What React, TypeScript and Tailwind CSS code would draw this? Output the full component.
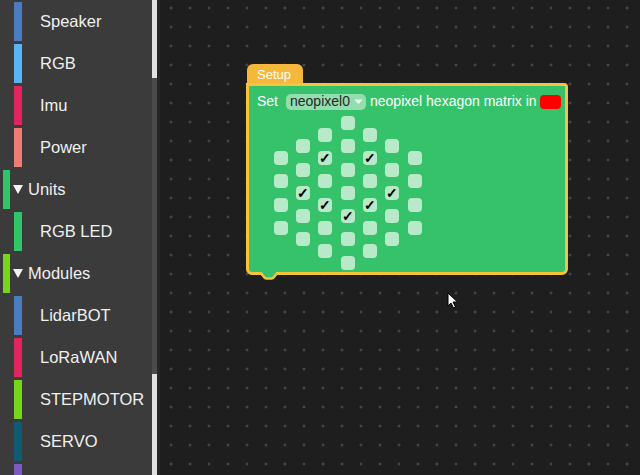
import React from "react";

type Row =
  | { kind: "item"; label: string; color: string }
  | { kind: "cat"; label: string; color: string };

const ROWS: Row[] = [
  { kind: "item", label: "Speaker", color: "bg-[#4c7cc0]" },
  { kind: "item", label: "RGB", color: "bg-[#5ab4f3]" },
  { kind: "item", label: "Imu", color: "bg-[#e3245f]" },
  { kind: "item", label: "Power", color: "bg-[#ef7d74]" },
  { kind: "cat", label: "Units", color: "bg-[#31c56a]" },
  { kind: "item", label: "RGB LED", color: "bg-[#31c56a]" },
  { kind: "cat", label: "Modules", color: "bg-[#76d61c]" },
  { kind: "item", label: "LidarBOT", color: "bg-[#4c7cc0]" },
  { kind: "item", label: "LoRaWAN", color: "bg-[#e3245f]" },
  { kind: "item", label: "STEPMOTOR", color: "bg-[#76d61c]" },
  { kind: "item", label: "SERVO", color: "bg-[#0f5b73]" },
  // next entry is scrolled off, only its colour bar peeks in
  { kind: "item", label: "", color: "bg-[#7a5bbf]" }
];

// number of cells per column, and which ones are ticked
const MATRIX: { count: number; checked: number[] }[] = [
  { count: 4, checked: [] },
  { count: 5, checked: [2] },
  { count: 6, checked: [1, 3] },
  { count: 7, checked: [4] },
  { count: 6, checked: [1, 3] },
  { count: 5, checked: [2] },
  { count: 4, checked: [] }
];

const font = { fontFamily: '"Liberation Sans", Arial, sans-serif' };

function SidebarRow({ row }: { row: Row }) {
  if (row.kind === "cat") {
    return (
      <div className="mb-[3px] flex h-[39px] shrink-0 items-center">
        <div className={`ml-[3px] h-full w-[7px] ${row.color}`} />
        <svg className="ml-[3px]" width="10" height="9" viewBox="0 0 10 9">
          <polygon points="0,0 10,0 5,9" fill="#f2f2f2" />
        </svg>
        <span className="ml-[5px] whitespace-nowrap text-[16.5px] text-[#f0f0f0]">{row.label}</span>
      </div>
    );
  }
  return (
    <div className="mb-[3px] flex h-[39px] shrink-0 items-center">
      <div className={`ml-[14px] h-full w-[8px] ${row.color}`} />
      {row.label && (
        <span className="ml-[18px] whitespace-nowrap text-[16.5px] text-[#f0f0f0]">{row.label}</span>
      )}
    </div>
  );
}

function Matrix() {
  return (
    <div className="ml-[24.5px] mt-[4px] flex items-center gap-x-[8.4px]">
      {MATRIX.map((col, ci) => (
        <div key={ci} className="flex flex-col gap-y-[9.3px]">
          {Array.from({ length: col.count }).map((_, ri) => (
            <div
              key={ri}
              className="flex h-[14px] w-[14px] items-center justify-center rounded-[4px] bg-[#b8eac9] text-[14px] font-bold leading-none text-black"
            >
              {col.checked.includes(ri) ? "✓" : ""}
            </div>
          ))}
        </div>
      ))}
    </div>
  );
}

function SetupBlock() {
  return (
    <div className="absolute left-[86px] top-[64px] w-[322px]">
      <div className="ml-[1px] flex h-[19px] w-[56px] items-center rounded-t-[6px] bg-[#f5b83d] pl-[10px] pt-[2px] text-[13px] text-white">
        Setup
      </div>
      <div className="h-[192px] rounded-b-[6px] rounded-tr-[4px] border-[3px] border-[#f5c43b] bg-[#35c26b]">
        <div className="flex items-center whitespace-nowrap pl-[8px] pt-[5px] text-[14px] text-white">
          <span className="shrink-0">Set</span>
          <div className="ml-[8px] flex h-[16px] w-[80px] shrink-0 items-center rounded-[5px] bg-[#93ddae] pl-[4px] text-[#1f2a24]">
            <span>neopixel0</span>
            <svg className="ml-[4px]" width="9" height="6" viewBox="0 0 9 6">
              <polygon points="0,0.5 9,0.5 4.5,5" fill="#e8f6ec" />
            </svg>
          </div>
          <span className="ml-[4px] shrink-0">neopixel hexagon matrix in</span>
          <div className="ml-[3px] h-[14px] w-[21px] shrink-0 rounded-[4px] bg-[#ff0000]" />
        </div>
        <Matrix />
      </div>
      <svg className="absolute left-[13px] top-[208px]" width="20" height="9" viewBox="0 0 20 9">
        <path d="M1 0 L5 5 Q6 6.5 7.5 6.5 L12.5 6.5 Q14 6.5 15 5 L19 0" fill="#35c26b" stroke="#f5c43b" strokeWidth="2.5" />
      </svg>
    </div>
  );
}

export default function App() {
  return (
    <div className="flex h-[475px] w-[640px] overflow-hidden" style={font}>
      <div className="flex w-[152px] shrink-0 flex-col overflow-hidden bg-[#3b3b3b] pt-[2px]">
        {ROWS.map((row, i) => (
          <SidebarRow key={i} row={row} />
        ))}
      </div>
      <div className="flex w-[5px] shrink-0 flex-col bg-[#4b4b4b]">
        <div className="h-[78px] bg-[#e2e2e2]" />
        <div className="flex-1" />
        <div className="h-[101px] bg-[#e2e2e2]" />
      </div>
      <div className="w-[3px] shrink-0 bg-[#262626]" />
      <div className="relative flex-1 bg-[#1e1e1e] bg-[radial-gradient(circle,#505050_1px,transparent_1.2px)] bg-[size:19px_19px] bg-[position:1.5px_-1.5px]">
        <SetupBlock />
        <svg className="absolute left-[287px] top-[292px]" width="12" height="17" viewBox="0 0 12 17">
          <path d="M1 1 L1 14 L4 11 L6.5 16 L8.5 15 L6 10 L10.5 10 Z" fill="#ffffff" stroke="#000000" strokeWidth="1" strokeLinejoin="round" />
        </svg>
      </div>
    </div>
  );
}
